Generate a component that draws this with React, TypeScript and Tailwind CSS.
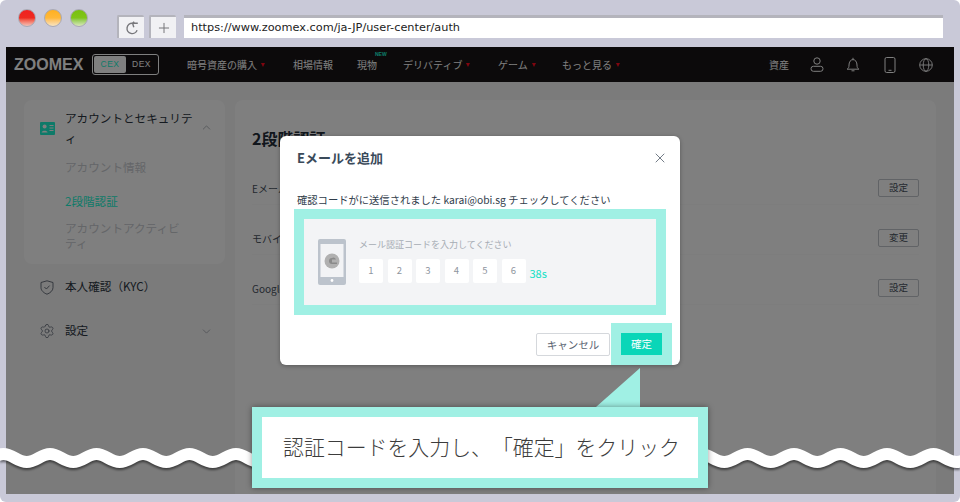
import { ChevronDown, ChevronUp, Settings, X, Plus } from "lucide-react";

const navItems = [
  { label: "暗号資産の購入", caret: true, className: "ml-[28px] w-[106px]" },
  { label: "相場情報", caret: false, className: "w-[64px]" },
  { label: "現物", caret: false, className: "w-[46px]", badge: true },
  { label: "デリバティブ", caret: true, className: "w-[95px]" },
  { label: "ゲーム", caret: true, className: "w-[64px]" },
  { label: "もっと見る", caret: true, className: "" },
];

const rows = [
  { label: "Eメール", action: "設定" },
  { label: "モバイル", action: "変更" },
  { label: "Google認証", action: "設定" },
];

// wave runs across the whole shot, one crest every 46.5px
function wavePath() {
  let d = "M -43 454";
  for (let x = -43; x < 980; x += 46.5) {
    d += ` C ${x + 9} 454, ${x + 14} 462, ${x + 23.25} 462`;
    d += ` C ${x + 32.5} 462, ${x + 37.5} 454, ${x + 46.5} 454`;
  }
  return d;
}

function Light({ className }: { className: string }) {
  return <div className={`h-[18px] w-[18px] rounded-full border border-[#a9a9b4] ${className}`} />;
}

function ToolButton({ children }: { children: React.ReactNode }) {
  return (
    <div className="flex h-[23px] w-[27px] items-center justify-center rounded-t-[2px] border-t-2 border-l-2 border-[#b4b4bc] bg-[#f1f1f4] text-[#77777b]">
      {children}
    </div>
  );
}

function Caret() {
  return <span className="ml-[4px] h-0 w-0 border-x-[2.5px] border-t-[4px] border-x-transparent border-t-[#ff0a1e]" />;
}

export default function App() {
  return (
    <div className="relative h-[502px] w-[960px] overflow-hidden bg-white font-['Noto_Sans_CJK_JP',sans-serif] [text-spacing-trim:space-all]">
      <div className="flex h-full flex-col rounded-[6px] bg-[#c9c9d8] px-[6px] pb-[8px]">
        {/* browser chrome */}
        <div className="flex h-[47px] shrink-0 items-start">
          <div className="ml-[12px] mt-[9px] flex gap-[8px]">
            <Light className="bg-gradient-to-b from-[#f02020] via-[#ee2a20] to-[#f0c0b8]" />
            <Light className="bg-gradient-to-b from-[#ffb020] via-[#ffb838] to-[#f8e4c0]" />
            <Light className="bg-gradient-to-b from-[#78c010] via-[#80c418] to-[#d8e8b8]" />
          </div>
          <div className="ml-[29px] mt-[15px] flex gap-[5px]">
            <ToolButton>
              <svg viewBox="0 0 16 16" fill="none" stroke="currentColor" strokeWidth="1.4" className="h-[16px] w-[16px]">
                <path d="M8.5 3.2a5.2 5.2 0 1 0 4.6 7" />
                <path d="M10.2 1.8 8.6 3.2l1.2 4M8.6 3.2h5.2" />
              </svg>
            </ToolButton>
            <ToolButton>
              <Plus size={16} strokeWidth={1.5} />
            </ToolButton>
          </div>
          <div className="ml-[8px] mt-[15px] flex h-[23px] w-[759px] items-center border-t-[3px] border-[#b4b4bc] bg-white pl-[7px] font-['DejaVu_Sans',sans-serif] text-[11.3px] text-[#222]">
            https://www.zoomex.com/ja-JP/user-center/auth
          </div>
        </div>

        {/* page */}
        <div className="relative min-h-0 flex-1 overflow-hidden bg-[#f6f6f7]">
          <div className="flex h-[35px] items-center bg-[#181416] pl-[8px] pr-[19px] text-[10px] text-white">
            <span className="w-[78px] font-['Liberation_Sans',sans-serif] text-[16px] font-bold text-[#fff]">ZOOMEX</span>
            <div className="flex h-[21px] w-[67px] items-center rounded-[3px] border border-white p-[1px] font-['Liberation_Sans',sans-serif] text-[8.5px] tracking-[0.5px]">
              <span className="flex h-full w-[32px] items-center justify-center rounded-[2px] bg-white text-[#1cf5d2]">CEX</span>
              <span className="flex-1 text-center">DEX</span>
            </div>
            {navItems.map((item) => (
              <div key={item.label} className={`relative flex items-center ${item.className}`}>
                <span>{item.label}</span>
                {item.caret && <Caret />}
                {item.badge && (
                  <span className="absolute left-[18px] top-[-6px] font-['Liberation_Sans',sans-serif] text-[5px] font-bold text-[#1cf5d2]">NEW</span>
                )}
              </div>
            ))}
            <div className="ml-auto flex items-center gap-[18.5px]">
              <span>資産</span>
              <svg viewBox="0 0 14 15" fill="none" stroke="currentColor" strokeWidth="1" className="h-[15px] w-[18px]">
                <circle cx="7" cy="4" r="3.2" />
                <rect x="1" y="9.3" width="12" height="5" rx="2.4" />
              </svg>
              <svg viewBox="0 0 14 15" fill="none" stroke="currentColor" strokeWidth="1" className="h-[15px] w-[18px]">
                <path d="M1.2 12.2c1.4-1 1.8-2 1.8-4.2 0-3 1.6-5.4 4-5.4s4 2.4 4 5.4c0 2.2.4 3.2 1.8 4.2z" />
                <path d="M5.5 13.8h3M7 .8v1.8" />
              </svg>
              <svg viewBox="0 0 14 16" fill="none" stroke="currentColor" strokeWidth="1" className="h-[16px] w-[18px]">
                <rect x="2" y=".5" width="10" height="15" rx="1.6" />
                <path d="M5.5 13.3h3" />
              </svg>
              <svg viewBox="0 0 14 14" fill="none" stroke="currentColor" strokeWidth="0.9" className="h-[14px] w-[18px]">
                <circle cx="7" cy="7" r="6.3" />
                <ellipse cx="7" cy="7" rx="2.8" ry="6.3" />
                <path d="M.7 7h12.6" />
              </svg>
            </div>
          </div>

          <div className="flex h-[412px] gap-[10px] pl-[18px] pr-[18px] pt-[18px]">
            {/* sidebar */}
            <div className="w-[201px] shrink-0">
              <div className="h-[164px] rounded-[8px] bg-white pl-[41px] pr-[12px] pt-[8px] text-[11.6px] leading-[20px]">
                <div className="relative w-[132px] text-[#2b3440]">
                  アカウントとセキュリティ
                  <svg viewBox="0 0 15 13" className="absolute left-[-25px] top-[14px] h-[13px] w-[15px]">
                    <rect width="15" height="13" rx="1" fill="#1cf5d2" />
                    <circle cx="4.6" cy="4.6" r="2" fill="#fff" />
                    <path d="M1.6 10.5c.4-2.4 5.6-2.4 6 0z" fill="#fff" />
                    <path d="M9.5 3.5h4M9.5 6h4M9.5 8.5h4" stroke="#fff" />
                  </svg>
                  <ChevronUp size={13} strokeWidth={1.2} className="absolute left-[135px] top-[13px] text-[#8a8f98]" />
                </div>
                <div className="mt-[9px] text-[#c9ccd1]">アカウント情報</div>
                <div className="mt-[14px] text-[#1cf5d2]">2段階認証</div>
                <div className="mt-[10px] w-[120px] leading-[15px] text-[#c9ccd1]">アカウントアクティビティ</div>
              </div>
              <div className="mt-[13px] flex h-[20px] items-center gap-[11px] pl-[16px] text-[11.6px] text-[#2b3440]">
                <svg viewBox="0 0 14 15" fill="none" stroke="#5c6470" strokeWidth="0.9" className="h-[15px] w-[14px]">
                  <path d="M1 2.5 7 .8l6 1.7v5.2c0 3-3 5.4-6 6.5-3-1.1-6-3.5-6-6.5z" />
                  <path d="m4.4 7 2 2 3.2-3.4" />
                </svg>
                本人確認（KYC）
              </div>
              <div className="mt-[24px] flex h-[20px] items-center pl-[15px] text-[11.6px] text-[#2b3440]">
                <Settings size={16} strokeWidth={1.1} className="mr-[10px] text-[#5c6470]" />
                設定
                <ChevronDown size={13} strokeWidth={1.2} className="ml-auto mr-[12px] text-[#8a8f98]" />
              </div>
            </div>

            {/* main panel */}
            <div className="h-[420px] flex-1 rounded-[8px] bg-white px-[17px] pt-[26px]">
              <div className="text-[16px] font-bold leading-[24px] text-[#232c38]">2段階認証</div>
              <div className="mt-[5px]">
                {rows.map((row) => (
                  <div key={row.label} className="flex h-[50px] items-center justify-between border-b border-[#fafafa] pb-[7px] pt-[24px] text-[10px] text-[#4a5260]">
                    <span>{row.label}</span>
                    <button className="h-[18px] w-[41px] rounded-[2px] border border-[#c2c6cc] text-[9.5px] leading-none text-[#4a5260]">{row.action}</button>
                  </div>
                ))}
              </div>
            </div>
          </div>

          <div className="absolute inset-0 bg-black/50" />

          {/* dialog */}
          <div className="absolute left-[274px] top-[89px] h-[229px] w-[400px] rounded-[6px] bg-white shadow-[0_1px_4px_rgba(0,0,0,0.3)]">
            <div className="flex h-[44px] items-center justify-between pb-[1px] pl-[17px] pr-[12px]">
              <span className="text-[13px] font-bold text-[#3a4a5a]">Eメールを追加</span>
              <X size={16} strokeWidth={1.2} className="text-[#4f5b68]" />
            </div>
            <div className="mt-[12px] pl-[17px] text-[10.3px] leading-[16px] text-[#2f3c4a]">確認コードがに送信されました karai@obi.sg チェックしてください</div>
            <div className="ml-[14px] mt-[1px] h-[106px] w-[372px] border-[10px] border-[#a0f0e4] bg-[#f3f4f6]">
              <div className="flex h-full items-center pl-[14px]">
                <svg viewBox="0 0 28 46" className="h-[46px] w-[28px] shrink-0">
                  <rect width="28" height="46" rx="2" fill="#bcc3cc" />
                  <rect x="2.5" y="5" width="23" height="33" fill="#f2f3f5" />
                  <circle cx="14" cy="22" r="7.5" fill="#b0b0b0" />
                  <path d="M14 19a3 3 0 1 0 0 6h5v-1.5h-5v-3h4A3 3 0 0 0 14 19z" fill="#8a8a8a" />
                  <circle cx="14" cy="41.5" r="1.4" fill="#fff" />
                </svg>
                <div className="-mt-[3px] ml-[13px]">
                  <div className="text-[9px] leading-[12px] text-[#a6acb4]">メール認証コードを入力してください</div>
                  <div className="mt-[8px] flex items-end">
                    <div className="flex gap-[4.5px]">
                      {["1", "2", "3", "4", "5", "6"].map((n) => (
                        <div key={n} className="flex h-[24px] w-[24px] items-center justify-center rounded-[2px] bg-white text-[9.5px] text-[#8f96a0]">{n}</div>
                      ))}
                    </div>
                    <span className="mb-[2px] ml-[4px] text-[11px] leading-[16px] text-[#0fe0c4]">38s</span>
                  </div>
                </div>
              </div>
            </div>
            <div className="flex justify-end pr-[8px] pt-[8px]">
              <button className="mt-[10px] h-[23px] w-[74px] rounded-[2px] border border-[#d5d8dc] text-[10.5px] text-[#5a6472]">キャンセル</button>
              <div className="ml-[1px] flex h-[42px] w-[61px] border-[10px] border-[#a0f0e4]">
                <button className="h-[22px] w-full bg-[#0ad6b8] text-[10.5px] text-white">確定</button>
              </div>
            </div>
          </div>
        </div>
      </div>

      {/* cut-off wave */}
      <svg viewBox="0 0 960 502" className="pointer-events-none absolute inset-0 h-[502px] w-[960px] drop-shadow-[0_2px_1px_rgba(0,0,0,0.5)]">
        <path d={wavePath()} fill="none" stroke="#fff" strokeWidth="12" />
      </svg>

      {/* callout */}
      <svg viewBox="0 0 44 39" className="absolute left-[596px] top-[368px] h-[39px] w-[44px]">
        <polygon points="44,0 44,39 0,39" fill="#a0f0e4" />
      </svg>
      <div className="absolute left-[252px] top-[407px] flex h-[81px] w-[456px] items-center border-[10px] border-[#a0f0e4] bg-white pb-[2px] pl-[21px] text-[20.9px] font-light text-[#3c3c3c] shadow-[0_0_6px_rgba(0,0,0,0.4)]">
        認証コードを入力し、「確定」をクリック
      </div>
    </div>
  );
}
